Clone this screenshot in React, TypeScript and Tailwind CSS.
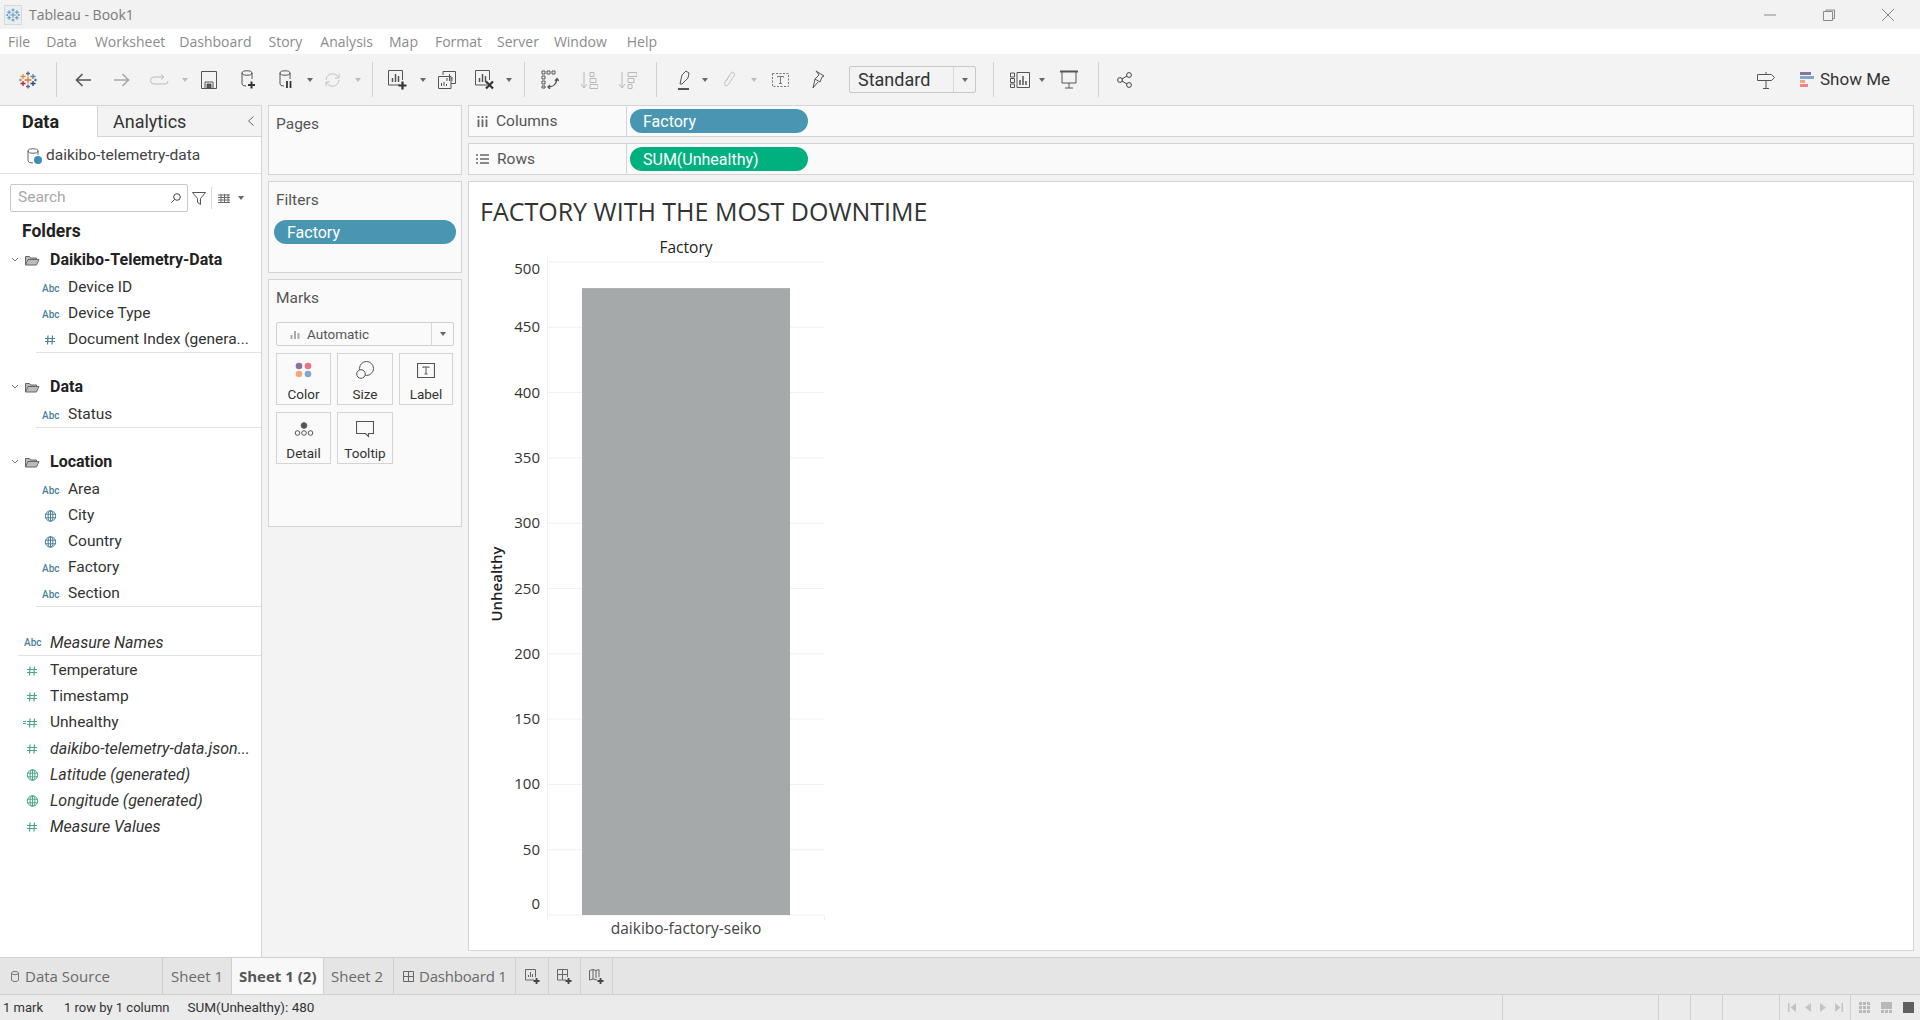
import React from 'react';

const FONT = "font-['Roboto','Liberation_Sans',sans-serif]";

const Arrow = ({ className = '', dim = false }: { className?: string; dim?: boolean }) => (
  <svg width="6" height="4" viewBox="0 0 6 4" className={`shrink-0 ${className}`}>
    <path d="M0 0h6L3 4z" fill={dim ? '#bdbdbd' : '#666'} />
  </svg>
);

const Sep = ({ className = '' }: { className?: string }) => <div className={`w-px h-[35px] bg-[#d0d0d0] shrink-0 ${className}`} />;

const Ico = ({ w, h, className = '', children, color = '#555' }: { w: number; h: number; className?: string; children: React.ReactNode; color?: string }) => (
  <svg width={w} height={h} viewBox={`0 0 ${w} ${h}`} fill="none" stroke={color} strokeWidth="1" className={`shrink-0 ${className}`}>
    {children}
  </svg>
);

const TableauLogo = ({ size = 18, mono = false }: { size?: number; mono?: boolean }) => {
  const c = (col: string) => (mono ? '#5b97bd' : col);
  const plus = (x: number, y: number, r: number, col: string) => (
    <path d={`M${x - r} ${y}H${x + r}M${x} ${y - r}V${y + r}`} stroke={c(col)} strokeWidth="1.3" />
  );
  return (
    <svg width={size} height={size} viewBox="0 0 18 18" className="shrink-0">
      {plus(9, 9, 3.5, '#e8762b')}
      {plus(9, 2.5, 2, '#5b6591')}
      {plus(9, 15.5, 2, '#5b6591')}
      {plus(4, 5.5, 2.5, '#eb912b')}
      {plus(14, 5.5, 2.5, '#5b879b')}
      {plus(4, 12.5, 2.5, '#c72035')}
      {plus(14, 12.5, 2.5, '#1f447e')}
      {plus(1.5, 9, 1.2, '#7099a6')}
      {plus(16.5, 9, 1.2, '#5b6591')}
    </svg>
  );
};

const Abc = () => (
  <span className="w-[17px] shrink-0 text-[10px] font-medium not-italic text-center text-[#4b7f9b]">Abc</span>
);

const Hash = ({ color }: { color: string }) => (
  <Ico w={17} h={12} color={color}>
    <path d="M6 1.5 5.5 10.5M10.5 1.5 10 10.5M3 4.5h10M3 7.5h10" strokeWidth="1.2" />
  </Ico>
);

const Globe = ({ color }: { color: string }) => (
  <Ico w={17} h={12} color={color}>
    <circle cx="8.5" cy="6" r="5.2" />
    <ellipse cx="8.5" cy="6" rx="2.4" ry="5.2" />
    <path d="M3.5 4.2h10M3.5 7.8h10M8.5 .8v10.4" />
  </Ico>
);

type Kind = 'abc' | 'hash' | 'globe' | 'calc';

const Field = ({ kind, label, italic = false, measure = false }: { kind: Kind; label: string; italic?: boolean; measure?: boolean }) => {
  const color = measure ? '#4ba884' : '#4b7f9b';
  return (
    <div className={`h-[26px] flex items-center text-[#333] ${measure ? 'pl-[24px]' : 'pl-[42px]'} ${italic ? 'italic text-[16px]' : 'text-[15.5px]'}`}>
      {kind === 'abc' && <Abc />}
      {kind === 'hash' && <Hash color={color} />}
      {kind === 'calc' && (
        <div className="relative">
          <Hash color={color} />
          <span className="absolute left-[-1px] top-[4px] w-[3px] h-[3px] border-y border-[#4ba884]" />
        </div>
      )}
      {kind === 'globe' && <Globe color={color} />}
      <span className="whitespace-nowrap ml-[9px]">{label}</span>
    </div>
  );
};

const FolderHead = ({ label, className = '' }: { label: string; className?: string }) => (
  <div className={`h-[26px] flex items-center pl-[11px] ${className}`}>
    <Ico w={8} h={6} color="#777"><path d="M1 1l3 3 3-3" /></Ico>
    <Ico w={15} h={11} className="ml-[6px]" color="#666">
      <path d="M.5 10V1.5h4l1 1.5h6V4.5M.5 10l2.5-5.5h11L11.5 10z" fill="#bbb" />
    </Ico>
    <span className="ml-[10px] text-[16px] font-bold text-[#222] whitespace-nowrap">{label}</span>
  </div>
);

const Pill = ({ label, green = false, className = '' }: { label: string; green?: boolean; className?: string }) => (
  <div className={`h-[24px] rounded-full flex items-center pl-[13px] pt-[2px] text-[16px] text-white ${green ? 'bg-[#00b180]' : 'bg-[#4996b2]'} ${className}`}>{label}</div>
);

const MarkCard = ({ label, icon, className = '' }: { label: string; icon: React.ReactNode; className?: string }) => (
  <div className={`h-[52px] border border-[#d4d4d4] flex flex-col items-center pt-[5px] text-[13.5px] text-[#333] ${className}`}>
    <div className="h-[22px] flex items-center">{icon}</div>
    <div className="mt-[5px] leading-[16px]">{label}</div>
  </div>
);

const Tab = ({ children, className = '' }: { children: React.ReactNode; className?: string }) => (
  <div className={`h-full flex items-center border-r border-[#cfcfcf] text-[15px] text-[#6a6a6a] ${className}`}>{children}</div>
);

const Chart = () => {
  const y = (v: number) => 915 - v * 1.306;
  const ticks = [500, 450, 400, 350, 300, 250, 200, 150, 100, 50, 0];
  const labelY = (v: number) => (v === 500 ? y(v) + 12 : v === 0 ? y(v) - 6 : y(v) + 5);
  return (
    <svg width="350" height="710" viewBox="480 235 350 710" className="mt-[6px] ml-[11px] font-['Open_Sans',sans-serif]">
      {ticks.map(t => (
        <g key={t}>
          <line x1="547" x2="824" y1={y(t)} y2={y(t)} stroke="#f0f0f0" />
          <text x="540" y={labelY(t)} textAnchor="end" fontSize="15" fill="#333">{t}</text>
        </g>
      ))}
      <line x1="547.5" x2="547.5" y1="257" y2="920" stroke="#f0f0f0" />
      <line x1="824.5" x2="824.5" y1="915" y2="920" stroke="#f0f0f0" />
      <rect x="582" y={y(480)} width="208" height={480 * 1.306} fill="#a5a9a9" />
      <text x="686" y="253" textAnchor="middle" fontSize="15.5" fontWeight="500" fill="#222">Factory</text>
      <text x="686" y="934" textAnchor="middle" fontSize="15.5" fill="#444">daikibo-factory-seiko</text>
      <text transform="translate(502 584) rotate(-90)" textAnchor="middle" fontSize="15" fontWeight="600" fill="#222">Unhealthy</text>
    </svg>
  );
};

export default function App() {
  return (
    <div className={`w-[1920px] h-[1020px] flex flex-col overflow-hidden bg-[#f3f3f3] ${FONT}`}>
      {/* title bar */}
      <div className="h-[29px] flex items-center bg-[#f2f2f2]">
        <div className="ml-[4px] w-[18px] h-[20px] bg-[#e9eef2] border border-[#d8d8d8] flex items-center justify-center"><TableauLogo size={14} mono /></div>
        <span className="ml-[7px] text-[14px] text-[#7a7a7a] font-['Open_Sans',sans-serif]">Tableau - Book1</span>
        <div className="ml-auto flex items-center pr-[26px]">
          <Ico w={12} h={2} color="#888"><path d="M0 1h12" /></Ico>
          <Ico w={12} h={12} className="ml-[47px]" color="#888"><path d="M3 2.5V1h8.5v8.5H10M.5 2.5h9v9h-9z" /></Ico>
          <Ico w={12} h={12} className="ml-[47px]" color="#888"><path d="M0 0l12 12M12 0L0 12" /></Ico>
        </div>
      </div>

      {/* menu */}
      <div className="h-[25px] bg-white flex items-center pl-[8px] text-[14px] text-[#8c8c8c] font-['Open_Sans',sans-serif]">
        <span>File</span>
        <span className="ml-[16px]">Data</span>
        <span className="ml-[18px]">Worksheet</span>
        <span className="ml-[14px]">Dashboard</span>
        <span className="ml-[17px]">Story</span>
        <span className="ml-[18px]">Analysis</span>
        <span className="ml-[16px]">Map</span>
        <span className="ml-[17px]">Format</span>
        <span className="ml-[15px]">Server</span>
        <span className="ml-[15px]">Window</span>
        <span className="ml-[20px]">Help</span>
      </div>

      {/* toolbar */}
      <div className="h-[51px] flex items-center pl-[19px] pr-[30px]">
        <TableauLogo />
        <Sep className="ml-[19px]" />
        <Ico w={16} h={14} className="ml-[18px]" color="#555"><path d="M16 7H1.5M7.5 1 1.5 7l6 6" strokeWidth="1.6" /></Ico>
        <Ico w={16} h={14} className="ml-[23px]" color="#a8a8a8"><path d="M0 7h14.5M8.5 1l6 6-6 6" strokeWidth="1.6" /></Ico>
        <Ico w={19} h={12} className="ml-[20px]" color="#bdbdbd"><path d="M13 3H4a3 3 0 0 0 0 7h11a3 3 0 0 0 3-3M11 .5 14 3l-3 2.5" /></Ico>
        <Arrow dim className="ml-[13px]" />
        <Ico w={16} h={18} className="ml-[13px]" color="#555"><path d="M.5.5h15v17H.5zM4 17.5V11h8v6.5" /><path d="M6 13h4v4H6z" fill="#555" /></Ico>
        <Ico w={14} h={19} className="ml-[24px]" color="#555"><path d="M1 3v11q0 2 4 2M11 3v6" /><ellipse cx="6" cy="3" rx="5" ry="2.2" /><path d="M7 15h7M10.5 11.5v7" strokeWidth="2" stroke="#333" /></Ico>
        <Ico w={13} h={19} className="ml-[24px]" color="#555"><path d="M1 3v11q0 2 4 2M11 3v6" /><ellipse cx="6" cy="3" rx="5" ry="2.2" /><path d="M8 11v7M11.5 11v7" strokeWidth="1.8" stroke="#333" /></Ico>
        <Arrow className="ml-[15px]" />
        <Ico w={17} h={16} className="ml-[11px]" color="#c4c4c4"><path d="M2 8a6.5 6.5 0 0 1 11-4.5L15 6M15 8a6.5 6.5 0 0 1-11 4.5L2 10M15 1.5V6h-4M2 14.5V10h4" /></Ico>
        <Arrow dim className="ml-[14px]" />
        <Sep className="ml-[11px]" />
        <Ico w={19} h={20} className="ml-[15px]" color="#555"><path d="M12 15H.5V.5h14V10" /><path d="M4.5 12V8M7.5 12V4M10.5 12V6" strokeWidth="1.5" /><path d="M10.5 15.5h8M14.5 11.5v8" strokeWidth="2.2" stroke="#333" /></Ico>
        <Arrow className="ml-[13px]" />
        <Ico w={18} h={18} className="ml-[12px]" color="#555"><path d="M5 4V.5h12.5v12H13M.5 5.5h12.5v12H.5z" fill="#f3f3f3" /><path d="M9 10V7M11.5 10V3M14 10V6M3.5 15v-3M6 15v-4M8.5 15v-2" /></Ico>
        <Ico w={20} h={20} className="ml-[19px]" color="#555"><path d="M12 15H.5V.5h14V10" /><path d="M4.5 12V8M7.5 12V4M10.5 12V6" strokeWidth="1.5" /><path d="M11 11.5l7 7M18 11.5l-7 7" strokeWidth="2.2" stroke="#333" /></Ico>
        <Arrow className="ml-[11px]" />
        <Sep className="ml-[12px]" />
        <Ico w={18} h={19} className="ml-[16px]" color="#555"><path d="M1 1h3v3H1zM6 1h3v3H6zM11 1h3v3h-3zM1 6h3v3H1zM1 11h3v3H1zM1 16h3v2H1z" /><path d="M7 17q8 0 9-8M14 11l2-2.5 2 2.5M9 15l-2 2 2 2" strokeWidth="1.3" /></Ico>
        <Ico w={18} h={18} className="ml-[21px]" color="#b8b8b8"><path d="M4 1v15M1 13l3 4 3-4M10 1.5h4v4h-4zM10 7.5h6v4h-6zM10 13.5h8v4h-8z" /></Ico>
        <Ico w={19} h={18} className="ml-[20px]" color="#b8b8b8"><path d="M4 1v15M1 13l3 4 3-4M10 1.5h9v4h-9zM10 7.5h6v4h-6zM10 13.5h4v4h-4z" /></Ico>
        <Sep className="ml-[19px]" />
        <Ico w={12} h={20} className="ml-[21px]" color="#555"><path d="M2 14l2-9 4-4 3 2-1 5-6 6z" /><path d="M0 19h11" strokeWidth="2" /></Ico>
        <Arrow className="ml-[12px]" />
        <Ico w={13} h={20} className="ml-[15px]" color="#c0c0c0"><path d="M3 11 8 3q2-2 3 0t0 3L5 15q-2 2-3 0t0-3l5-7" /></Ico>
        <Arrow dim className="ml-[15px]" />
        <Ico w={17} h={14} className="ml-[15px]" color="#777"><path d="M.5.5h16v13H.5z" strokeDasharray="2 1.5" /><path d="M5.5 4.500V3.500h6v1M8.500 3.500v7M7 10.500h3" /></Ico>
        <Ico w={14} h={20} className="ml-[22px]" color="#555"><path d="M5 1l8 5-2 1-2 5-5-3 4-4zM4 9 2 18l5-6" /></Ico>
        <div className="ml-[24px] w-[127px] h-[27px] border border-[#c8c8c8] rounded-[2px] flex items-center shrink-0">
          <span className="flex-1 pl-[8px] text-[18px] text-[#333]">Standard</span>
          <div className="w-[22px] h-full border-l border-[#d8d8d8] flex items-center justify-center"><Arrow /></div>
        </div>
        <Sep className="ml-[17px]" />
        <Ico w={20} h={16} className="ml-[16px]" color="#555"><path d="M.5 1h4v4h-4zM.5 6.500h4v4h-4zM.5 12h4v3.500h-4zM7 .5h12.500v15H7z" /><path d="M10 13V8M13 13V4M16 13V9" strokeWidth="1.5" /></Ico>
        <Arrow className="ml-[9px]" />
        <Ico w={18} h={19} className="ml-[15px]" color="#555"><path d="M0 1.500h18" strokeWidth="2" /><path d="M2 2v11h14V2M9 13v5M5 18h8" /></Ico>
        <Sep className="ml-[20px]" />
        <Ico w={15} h={16} className="ml-[18px]" color="#444"><circle cx="3" cy="8" r="2.4" /><circle cx="12" cy="3" r="2.4" /><circle cx="12" cy="13" r="2.4" /><path d="M5 7l5-3M5 9l5 3" /></Ico>
        <Ico w={18} h={18} className="ml-auto" color="#555"><path d="M.5 3.500h14l3 3-3 3H.5zM9 1v2M9 10v7M6 17.500h6" /></Ico>
        <div className="ml-[25px] flex flex-col gap-[1px] shrink-0">
          <div className="w-[11px] h-[3px] bg-[#8a7299]" />
          <div className="w-[14px] h-[3px] bg-[#7fa8d0]" />
          <div className="w-[5px] h-[3px] bg-[#f0a878]" />
          <div className="w-[8px] h-[3px] bg-[#f0808c]" />
        </div>
        <span className="ml-[6px] text-[17px] text-[#333]">Show Me</span>
      </div>

      {/* main */}
      <div className="h-[852px] flex">
        <aside className="w-[262px] shrink-0 bg-white border-r border-[#d4d4d4]">
          <div className="h-[32px] flex border-t border-[#d4d4d4]">
            <div className="w-[97px] pl-[22px] flex items-center text-[18px] font-bold text-[#222]">Data</div>
            <div className="flex-1 bg-[#f3f3f3] border-l border-b border-[#d4d4d4] flex items-center pl-[15px] text-[18px] text-[#333]">
              Analytics
              <Ico w={6} h={10} className="ml-auto mr-[7px]" color="#666"><path d="M5.500.5l-5 4.500 5 4.500" /></Ico>
            </div>
          </div>
          <div className="h-[37px] flex items-center pl-[27px] pt-[2px] border-b border-[#e2e2e2] text-[15.5px] text-[#444]">
            <div className="relative">
              <Ico w={13} h={16} color="#666"><path d="M1 3v10q0 2 5 2M11 3v4" /><ellipse cx="6" cy="3" rx="5" ry="2.2" /></Ico>
              <span className="absolute right-[-2px] bottom-0 w-[8px] h-[8px] rounded-full bg-[#3e8cb8]" />
            </div>
            <span className="ml-[6px]">daikibo-telemetry-data</span>
          </div>
          <div className="mt-[10px] flex items-center pl-[10px]">
            <div className="w-[178px] h-[28px] border border-[#c8c8c8] rounded-[2px] flex items-center pl-[7px] pr-[6px] text-[15.5px] text-[#a8a8a8]">
              Search
              <Ico w={10} h={10} className="ml-auto" color="#444"><circle cx="6" cy="4" r="3.3" /><path d="M3.500 6.500.5 9.500" /></Ico>
            </div>
            <Ico w={14} h={13} className="ml-[4px]" color="#555"><path d="M.5.5h13L8.500 6.500v6l-3-2v-4z" /></Ico>
            <div className="ml-[5px] w-px h-[22px] bg-[#d8d8d8]" />
            <Ico w={12} h={9} className="ml-[6px]" color="#666"><path d="M0 1h12M0 3.500h12M0 6h12M0 8.500h12M3 0v9M6.500 0v9M10 0v9" /></Ico>
            <Arrow className="ml-[8px]" />
          </div>
          <div className="mt-[6px] h-[26px] pl-[22px] flex items-center text-[17.5px] font-bold text-[#222]">Folders</div>
          <FolderHead label="Daikibo-Telemetry-Data" className="mt-[3px]" />
          <div className="mt-[2px]">
            <Field kind="abc" label="Device ID" />
            <Field kind="abc" label="Device Type" />
            <Field kind="hash" label="Document Index (genera..." />
          </div>
          <div className="-mt-px ml-[36px] border-t border-[#e2e2e2]" />
          <FolderHead label="Data" className="mt-[21px]" />
          <div className="mt-[2px]"><Field kind="abc" label="Status" /></div>
          <div className="-mt-px ml-[36px] border-t border-[#e2e2e2]" />
          <FolderHead label="Location" className="mt-[21px]" />
          <div className="mt-[2px]">
            <Field kind="abc" label="Area" />
            <Field kind="globe" label="City" />
            <Field kind="globe" label="Country" />
            <Field kind="abc" label="Factory" />
            <Field kind="abc" label="Section" />
          </div>
          <div className="-mt-px ml-[36px] border-t border-[#e2e2e2]" />
          <div className="mt-[23px] ml-[18px] h-[26px] flex items-center pl-[6px] text-[16px] italic text-[#333] border-b border-[#e2e2e2]">
            <Abc /><span className="ml-[9px]">Measure Names</span>
          </div>
          <div className="mt-[2px]">
            <Field measure kind="hash" label="Temperature" />
            <Field measure kind="hash" label="Timestamp" />
            <Field measure kind="calc" label="Unhealthy" />
            <Field measure italic kind="hash" label="daikibo-telemetry-data.json..." />
            <Field measure italic kind="globe" label="Latitude (generated)" />
            <Field measure italic kind="globe" label="Longitude (generated)" />
            <Field measure italic kind="hash" label="Measure Values" />
          </div>
        </aside>

        <div className="w-[200px] shrink-0 pl-[6px] flex flex-col gap-[6px] text-[15.5px] text-[#555]">
          <section className="h-[70px] bg-[#fafafa] border border-[#d4d4d4] pl-[7px] pt-[8px] leading-[20px]">Pages</section>
          <section className="h-[92px] bg-[#fafafa] border border-[#d4d4d4] pt-[8px] leading-[20px]">
            <div className="pl-[7px]">Filters</div>
            <Pill label="Factory" className="mt-[10px] mx-[5px]" />
          </section>
          <section className="h-[248px] bg-[#fafafa] border border-[#d4d4d4] pt-[8px] px-[7px] leading-[20px]">
            <div>Marks</div>
            <div className="mt-[14px] h-[24px] border border-[#cfcfcf] rounded-[2px] flex items-center text-[13.5px]">
              <Ico w={10} h={9} className="ml-[13px]" color="#aaa"><path d="M1.500 9V5M5 9V1M8.500 9V3" strokeWidth="2" /></Ico>
              <span className="ml-[7px] flex-1">Automatic</span>
              <div className="w-[22px] h-full border-l border-[#d8d8d8] flex items-center justify-center"><Arrow /></div>
            </div>
            <div className="mt-[7px] grid grid-cols-[55px_56px_54px] gap-x-[6px] gap-y-[7px]">
              <MarkCard label="Color" icon={
                <svg width="17" height="16" viewBox="0 0 17 16"><circle cx="4" cy="4" r="3.3" fill="#8a7299" /><circle cx="13" cy="4" r="3.3" fill="#f0708a" /><circle cx="4" cy="12" r="3.3" fill="#f0a878" /><circle cx="13" cy="12" r="3.3" fill="#7fa8d0" /></svg>
              } />
              <MarkCard label="Size" icon={
                <Ico w={18} h={18} color="#555"><circle cx="10.5" cy="7.5" r="7" /><circle cx="5" cy="13" r="4.3" fill="#fafafa" /></Ico>
              } />
              <MarkCard label="Label" icon={
                <Ico w={18} h={15} color="#555"><path d="M.5.5h17v14H.5z" strokeWidth="1.2" /><path d="M6 5V4h6v1M9 4v7M7.500 11h3" /></Ico>
              } />
              <MarkCard label="Detail" icon={
                <Ico w={20} h={15} color="#555"><circle cx="10" cy="3.5" r="2.8" fill="#555" /><circle cx="3.5" cy="11" r="2.3" /><circle cx="10" cy="11" r="2.3" /><circle cx="16.5" cy="11" r="2.3" /></Ico>
              } />
              <MarkCard label="Tooltip" icon={
                <Ico w={18} h={17} color="#555"><path d="M.5.5h17v12h-5v3l-3-3H.5z" strokeWidth="1.1" /></Ico>
              } />
            </div>
          </section>
        </div>

        <div className="flex-1 pl-[6px] pr-[6px] flex flex-col gap-[6px] text-[15.5px] text-[#555]">
          <div className="h-[32px] bg-[#fafafa] border border-[#d4d4d4] flex">
            <div className="w-[158px] border-r border-[#d4d4d4] flex items-center pl-[8px]">
              <Ico w={11} h={11} color="#666"><path d="M1.500 3.500V11M5.500 3.500V11M9.500 3.500V11M1.500 0v2M5.500 0v2M9.500 0v2" strokeWidth="1.8" /></Ico>
              <span className="ml-[8px] mt-[2px]">Columns</span>
            </div>
            <Pill label="Factory" className="w-[178px] ml-[3px] mt-[3px]" />
          </div>
          <div className="h-[32px] bg-[#fafafa] border border-[#d4d4d4] flex">
            <div className="w-[158px] border-r border-[#d4d4d4] flex items-center pl-[7px]">
              <Ico w={13} h={10} color="#666"><path d="M0 1h2M4 1h9M0 5h2M4 5h9M0 9h2M4 9h9" strokeWidth="1.5" /></Ico>
              <span className="ml-[8px] mt-[2px]">Rows</span>
            </div>
            <Pill green label="SUM(Unhealthy)" className="w-[178px] ml-[3px] mt-[3px]" />
          </div>
          <div className="h-[770px] bg-white border border-[#d4d4d4]">
            <h1 className="pl-[11px] pt-[11px] leading-[36px] text-[25px] text-[#333] font-['Open_Sans',sans-serif]">FACTORY WITH THE MOST DOWNTIME</h1>
            <Chart />
          </div>
        </div>
      </div>

      {/* sheet tabs */}
      <div className="h-[37px] flex bg-[#e5e5e5] border-t border-[#cfcfcf] font-['Open_Sans',sans-serif]">
        <Tab className="w-[163px] pl-[11px]">
          <Ico w={8} h={11} color="#777"><path d="M.5 2v7q0 1.500 3.500 1.500T7.500 9V2Q7.500.5 4 .5T.5 2zM.5 3q3.500 1.500 7 0" /></Ico>
          <span className="ml-[6px]">Data Source</span>
        </Tab>
        <Tab className="w-[69px] pl-[8px]">Sheet 1</Tab>
        <Tab className="w-[92px] pl-[7px] bg-[#f8f8f8] font-bold text-[#555] text-[14px]">Sheet 1 (2)</Tab>
        <Tab className="w-[70px] pl-[7px]">Sheet 2</Tab>
        <Tab className="w-[122px] pl-[9px] tracking-[-0.2px]">
          <Ico w={11} h={11} color="#666"><path d="M.5.5h10v10H.5zM.5 5.500h10M5.500.5v10" /></Ico>
          <span className="ml-[5px]">Dashboard 1</span>
        </Tab>
        <Tab className="w-[33px] justify-center">
          <Ico w={15} h={15} color="#666"><path d="M9 11H.5V.5h10V8M3.500 8V6M5.500 8V3M7.500 8V5" /><path d="M8.500 12h6M11.500 9v6" strokeWidth="1.8" stroke="#444" /></Ico>
        </Tab>
        <Tab className="w-[32px] justify-center">
          <Ico w={15} h={15} color="#666"><path d="M9 11H.5V.5h10V8M.5 5.500h10M5.500.5V11" /><path d="M8.500 12h6M11.500 9v6" strokeWidth="1.8" stroke="#444" /></Ico>
        </Tab>
        <Tab className="w-[32px] justify-center">
          <Ico w={15} h={15} color="#666"><path d="M.5 1.500 4 .5l3 1 3-1V8M.5 1.500V11L4 10l4 1M4 .5V10M7 1.500V9" /><path d="M8.500 12h6M11.500 9v6" strokeWidth="1.8" stroke="#444" /></Ico>
        </Tab>
      </div>

      {/* status bar */}
      <div className="h-[26px] flex items-center bg-[#ebebeb] border-t border-[#cfcfcf] text-[13px] text-[#333] pl-[3px]">
        <span>1 mark</span>
        <span className="ml-[21px]">1 row by 1 column</span>
        <span className="ml-[18px] text-[13.5px]">SUM(Unhealthy): 480</span>
        <div className="ml-auto h-full flex">
          <div className="w-[156px] border-l border-[#cfcfcf]" />
          <div className="w-[32px] border-l border-[#cfcfcf]" />
          <div className="w-[32px] border-l border-[#cfcfcf]" />
          <div className="w-[57px] border-l border-[#cfcfcf]" />
          <div className="w-[71px] border-l border-[#cfcfcf] flex items-center justify-center gap-[9px]">
            <svg width="8" height="9" viewBox="0 0 8 9" fill="#c4c4c4"><path d="M0 0h1.500v9H0zM8 0v9L2.500 4.500z" /></svg>
            <svg width="6" height="9" viewBox="0 0 6 9" fill="#c4c4c4"><path d="M6 0v9L0 4.500z" /></svg>
            <svg width="6" height="9" viewBox="0 0 6 9" fill="#c4c4c4"><path d="M0 0v9l6-4.500z" /></svg>
            <svg width="8" height="9" viewBox="0 0 8 9" fill="#c4c4c4"><path d="M8 0H6.500v9H8zM0 0v9l5.500-4.500z" /></svg>
          </div>
          <div className="w-[70px] border-l border-[#cfcfcf] flex items-center pl-[8px] gap-[11px]">
            <div className="grid grid-cols-3 gap-px w-[11px]">
              {Array.from({ length: 9 }, (_, i) => <span key={i} className="h-[3px] bg-[#b8b8b8]" />)}
            </div>
            <div className="w-[11px] flex flex-col gap-px">
              <span className="h-[7px] bg-[#b8b8b8]" />
              <div className="grid grid-cols-3 gap-px">
                {[0, 1, 2].map(i => <span key={i} className="h-[3px] bg-[#b8b8b8]" />)}
              </div>
            </div>
            <span className="w-[11px] h-[11px] bg-[#5f5f5f]" />
          </div>
        </div>
      </div>
    </div>
  );
}
